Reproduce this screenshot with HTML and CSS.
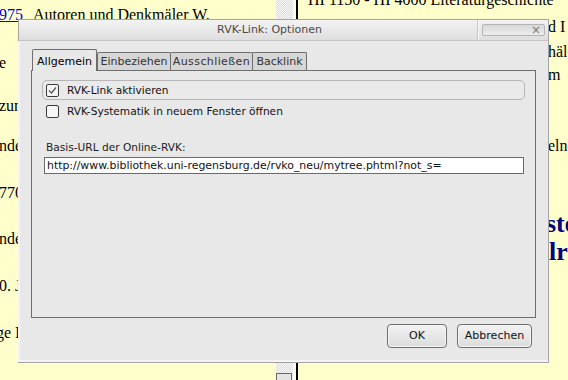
FILE: index.html
```html
<!DOCTYPE html>
<html lang="de">
<head>
<meta charset="utf-8">
<title>RVK-Link: Optionen</title>
<link rel="stylesheet" href="styles.css">
</head>
<body>
<div class="page">
  <div class="frame-left">
    <p class="entry e1"><a class="sig" href="#">975</a>Autoren und Denkmäler W.</p>
    <p class="entry e2">e</p>
    <p class="entry e3">zum</p>
    <p class="entry e4">nde</p>
    <p class="entry e5">770</p>
    <p class="entry e6">nde</p>
    <p class="entry e7">0. J</p>
    <p class="entry e8">ge I</p>
  </div>
  <div class="scrollbar"><div class="scroll-btn"></div></div>
  <div class="gutter"></div>
  <div class="divider"></div>
  <div class="frame-right">
    <p class="heading-line">HI 1150 - HI 4000 Literaturgeschichte</p>
    <p class="tail t1">d I</p>
    <p class="tail t2">häle</p>
    <p class="tail t3">m</p>
    <p class="tail t4">elne</p>
    <p class="tail big b1">ste</p>
    <p class="tail big b2">lr</p>
  </div>
</div>

<div class="dialog">
  <div class="titlebar">
    <div class="title">RVK-Link: Optionen</div>
    <div class="title-controls">
      <div class="close-btn">×</div>
    </div>
  </div>
  <div class="dialog-body">
    <div class="tabs">
      <div class="tab active tab-allg">Allgemein</div>
      <div class="tab tab-einb">Einbeziehen</div>
      <div class="tab tab-auss">Ausschließen</div>
      <div class="tab tab-back">Backlink</div>
    </div>
    <div class="panel">
      <label class="check-row focused">
        <span class="checkbox checked">
          <svg width="11" height="11" viewBox="0 0 11 11"><path d="M2 5.5 L4.5 8 L9 2.5" fill="none" stroke="#555" stroke-width="1.2"/></svg>
        </span>
        <span>RVK-Link aktivieren</span>
      </label>
      <label class="check-row">
        <span class="checkbox"></span>
        <span>RVK-Systematik in neuem Fenster öffnen</span>
      </label>
      <div class="field-label">Basis-URL der Online-RVK:</div>
      <div class="text-input">http://www.bibliothek.uni-regensburg.de/rvko_neu/mytree.phtml?not_s=</div>
    </div>
    <div class="buttons">
      <div class="btn btn-ok">OK</div>
      <div class="btn btn-cancel">Abbrechen</div>
    </div>
  </div>
</div>
</body>
</html>
```
FILE: styles.css
```css
html, body {
  margin: 0;
  padding: 0;
  width: 568px;
  height: 380px;
  overflow: hidden;
  background: #ffffcc;
}

.page {
  display: flex;
  height: 380px;
  font-family: "Liberation Serif", "Times New Roman", serif;
  font-size: 16px;
  color: #000;
}

.frame-left {
  width: 276px;
  overflow: hidden;
  white-space: nowrap;
}

.entry {
  margin: 0;
  line-height: 18px;
  margin-left: -1px;
}
.entry a { color: #0000ee; }
.sig {
  display: inline-block;
  width: 34px;
}
.e1 { margin-top: 6px; }
.e2 { margin-top: 30px; }
.e3 { margin-top: 25px; }
.e4 { margin-top: 22px; }
.e5 { margin-top: 29px; }
.e6 { margin-top: 28px; }
.e7 { margin-top: 29px; }
.e8 { margin-top: 29px; margin-left: -4px; }

.scrollbar {
  width: 17px;
  background-color: #f6f6f6;
  background-image: repeating-conic-gradient(#dcdcdc 0 25%, #f8f8f8 0 50%);
  background-size: 2px 2px;
  display: flex;
  flex-direction: column;
  justify-content: flex-end;
}
.scroll-btn {
  height: 6px;
  margin: 0 1px 0 0;
  border: 1px solid #6a6a6a;
  border-bottom: none;
  background: #e4e4e4;
}

.gutter {
  width: 3px;
  background: #fbfbf0;
}
.divider {
  width: 2px;
  background: #000;
}

.frame-right {
  flex: 1;
  overflow: hidden;
  white-space: nowrap;
  padding-left: 10px;
}
.heading-line {
  margin: -9px 0 0 0;
  line-height: 18px;
  font-size: 16px;
}
.tail {
  margin: 0;
  line-height: 18px;
  padding-left: 240px;
}
.t1 { margin-top: 9px; }
.t2 { margin-top: 7px; }
.t3 { margin-top: 5px; }
.t4 { margin-top: 53px; }
.big {
  font-size: 26px;
  font-weight: bold;
  color: #000080;
  line-height: 30px;
}
.b1 { margin-top: 54px; padding-left: 238px; }
.b2 { margin-top: -2px; padding-left: 241px; }

/* Dialog */
.dialog {
  position: absolute;
  left: 18px;
  top: 19px;
  width: 529px;
  height: 342px;
  border: 1px solid #a4a4a4;
  background: #e8e8e8;
  display: flex;
  flex-direction: column;
  font-family: "DejaVu Sans", "Verdana", sans-serif;
  font-size: 10.6px;
  color: #111;
}

.titlebar {
  height: 20px;
  display: flex;
  align-items: stretch;
  background: linear-gradient(#f3f3f3, #dedede);
  border-bottom: 1px solid #c6c6c6;
}
.title {
  flex: 1;
  text-align: center;
  line-height: 20px;
  color: #4a4a4a;
  font-size: 11px;
  padding-left: 42px;
}
.title-controls {
  width: 69px;
  border-left: 1px solid #f8f8f8;
  box-shadow: -1px 0 0 #c8c8c8;
  display: flex;
  align-items: center;
  justify-content: center;
}
.close-btn {
  width: 58px;
  height: 10px;
  border: 1px solid #b4b4b4;
  border-radius: 2px;
  background: linear-gradient(#d8d8d8, #ececec);
  font-size: 12px;
  line-height: 10px;
  text-align: right;
  padding-right: 3px;
  color: #777;
}

.dialog-body {
  flex: 1;
  display: flex;
  flex-direction: column;
  padding: 8px 12px 0 11px;
  border-left: 2px solid #f4f4f4;
  border-bottom: 2px solid #f4f4f4;
  margin-left: -1px;
}

.tabs {
  display: flex;
  align-items: flex-end;
  height: 21px;
  position: relative;
  z-index: 1;
  margin-left: 1px;
}
.tab {
  box-sizing: border-box;
  height: 18px;
  line-height: 18px;
  text-align: center;
  border: 1px solid #6e6e6e;
  border-bottom: none;
  background: #d6d6d6;
  color: #333;
  border-radius: 2px 2px 0 0;
  font-size: 11px;
}
.tab.active {
  height: 22px;
  line-height: 24px;
  background: #e8e8e8;
  color: #000;
  margin-bottom: -1px;
}
.tab-allg { width: 65px; }
.tab-einb { width: 74px; }
.tab-auss { width: 83px; margin-left: -1px; letter-spacing: 0.4px; }
.tab-back { width: 55px; margin-left: -1px; }

.panel {
  box-sizing: border-box;
  height: 248px;
  border: 1px solid #6e6e6e;
  display: flex;
  flex-direction: column;
  padding: 9px 10px 0 10px;
}

.check-row {
  display: flex;
  align-items: center;
  height: 18px;
  padding-left: 3px;
  border: 1px solid transparent;
  border-radius: 5px;
  gap: 8px;
}
.check-row.focused {
  border-color: #b6b6b6;
  background: #eaeaea;
  margin-bottom: 1px;
}
.checkbox {
  width: 11px;
  height: 11px;
  border: 1px solid #3a3a3a;
  border-radius: 2px;
  background: #f6f6f6;
  display: flex;
  align-items: center;
  justify-content: center;
}

.field-label {
  margin-top: 19px;
  padding-left: 4px;
  height: 14px;
  line-height: 14px;
  color: #222;
}
.text-input {
  margin-top: 3px;
  margin-left: 2px;
  width: 476px;
  height: 15px;
  line-height: 15px;
  border: 1px solid #6a6a6a;
  background: #fff;
  padding-left: 2px;
  color: #111;
  font-size: 10.9px;
}

.buttons {
  display: flex;
  justify-content: flex-end;
  gap: 10px;
  padding: 6px 4px 0 0;
}
.btn {
  height: 22px;
  line-height: 22px;
  border: 1px solid #6e6e6e;
  border-radius: 4px;
  background: linear-gradient(#f2f2f2, #dcdcdc);
  box-shadow: inset 0 0 0 1px #f6f6f6;
  text-align: center;
  color: #111;
  font-size: 11px;
}
.btn-ok { width: 58px; }
.btn-cancel { width: 73px; }
```
